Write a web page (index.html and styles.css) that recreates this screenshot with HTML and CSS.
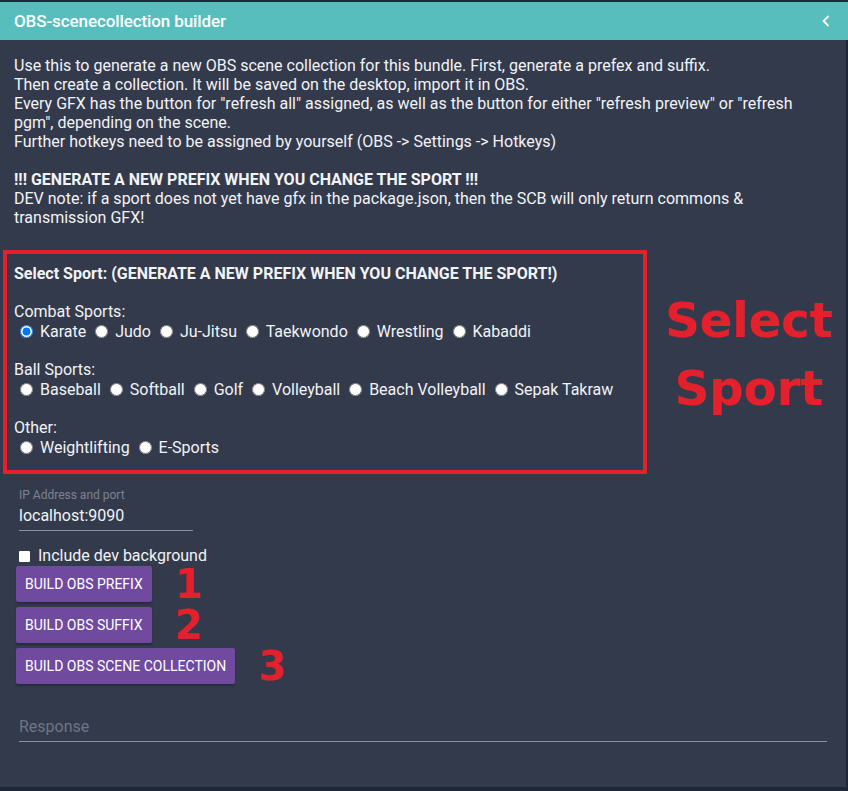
FILE: index.html
```html
<!DOCTYPE html>
<html>
<head>
<meta charset="utf-8">
<link rel="stylesheet" href="styles.css">
</head>
<body>
<div class="panel">
  <div class="header">
    <span class="title">OBS-scenecollection builder</span>
    <svg class="chev" width="10" height="14" viewBox="0 0 10 14"><path d="M7.5 2 L2.5 7 L7.5 12" fill="none" stroke="#ffffff" stroke-width="1.8"/></svg>
  </div>
  <div class="content">
    <div class="intro">
      <div>Use this to generate a new OBS scene collection for this bundle. First, generate a prefex and suffix.</div>
      <div>Then create a collection. It will be saved on the desktop, import it in OBS.</div>
      <div>Every GFX has the button for "refresh all" assigned, as well as the button for either "refresh preview" or "refresh</div>
      <div>pgm", depending on the scene.</div>
      <div>Further hotkeys need to be assigned by yourself (OBS -&gt; Settings -&gt; Hotkeys)</div>
      <div class="blank"></div>
      <div class="bold">!!! GENERATE A NEW PREFIX WHEN YOU CHANGE THE SPORT !!!</div>
      <div>DEV note: if a sport does not yet have gfx in the package.json, then the SCB will only return commons &amp;</div>
      <div>transmission GFX!</div>
    </div>

    <div class="sport-row">
      <div class="sport-box">
        <div class="bold line">Select Sport: (GENERATE A NEW PREFIX WHEN YOU CHANGE THE SPORT!)</div>
        <div class="group">
          <div class="line">Combat Sports:</div>
          <div class="line radios"><input type="radio" name="s" checked> Karate <input type="radio" name="s"> Judo <input type="radio" name="s"> Ju-Jitsu <input type="radio" name="s"> Taekwondo <input type="radio" name="s"> Wrestling <input type="radio" name="s"> Kabaddi</div>
        </div>
        <div class="group">
          <div class="line">Ball Sports:</div>
          <div class="line radios"><input type="radio" name="s"> Baseball <input type="radio" name="s"> Softball <input type="radio" name="s"> Golf <input type="radio" name="s"> Volleyball <input type="radio" name="s"> Beach Volleyball <input type="radio" name="s"> Sepak Takraw</div>
        </div>
        <div class="group">
          <div class="line">Other:</div>
          <div class="line radios"><input type="radio" name="s"> Weightlifting <input type="radio" name="s"> E-Sports</div>
        </div>
      </div>
      <div class="annot">Select<br>Sport</div>
    </div>

    <div class="field ip">
      <div class="flabel">IP Address and port</div>
      <div class="fvalue">localhost:9090</div>
    </div>

    <label class="check"><span class="cbox"></span>Include dev background</label>

    <div class="btn-row first"><button class="btn">BUILD OBS PREFIX</button><span class="num">1</span></div>
    <div class="btn-row"><button class="btn">BUILD OBS SUFFIX</button><span class="num">2</span></div>
    <div class="btn-row"><button class="btn">BUILD OBS SCENE COLLECTION</button><span class="num">3</span></div>

    <div class="field resp">
      <div class="fvalue placeholder">Response</div>
    </div>
  </div>
</div>
</body>
</html>
```

FILE: styles.css
```css
html, body {
  margin: 0;
  padding: 0;
  background: #1f2838;
}
body {
  width: 848px;
  height: 791px;
  overflow: hidden;
  font-family: Roboto, "Liberation Sans", sans-serif;
  color: #f2f3f5;
}
.panel {
  margin-top: 2px;
  width: 846px;
  height: 785px;
  background: #333a4c;
  box-sizing: border-box;
}
.header {
  height: 38px;
  background: #58bdbd;
  display: flex;
  align-items: center;
  justify-content: space-between;
  padding: 0 17px 0 14px;
  box-sizing: border-box;
  width: 848px;
}
.title {
  font-size: 17px;
  font-weight: 500;
  color: #ffffff;
  letter-spacing: -0.1px;
}
.chev {
  display: block;
}
.content {
  padding: 16px 0 0 0;
}
.intro {
  padding-left: 14px;
  font-size: 16px;
  line-height: 19px;
  white-space: nowrap;
}
.blank {
  height: 19px;
}
.bold {
  font-weight: 700;
}
.sport-row {
  display: flex;
  margin-top: 23px;
}
.sport-box {
  margin-left: 3px;
  width: 644px;
  height: 224px;
  box-sizing: border-box;
  border: 4px solid #e3202b;
  padding: 10px 0 0 7px;
  font-size: 16px;
  white-space: nowrap;
}
.line {
  line-height: 20px;
  height: 20px;
}
.group {
  margin-top: 18px;
}
.radios input {
  width: 13px;
  height: 13px;
  margin: 0 3px 0 5px;
  vertical-align: -1px;
}
.radios input:first-child {
  margin-left: 6px;
}
.annot {
  flex: 1;
  text-align: center;
  font-family: "DejaVu Sans", sans-serif;
  font-weight: 700;
  font-size: 48px;
  line-height: 68px;
  color: #e3202b;
  padding-top: 36px;
  padding-left: 4px;
}
.field {
  margin-left: 19px;
}
.ip {
  margin-top: 14px;
  width: 174px;
  border-bottom: 1px solid #8a909c;
}
.flabel {
  font-size: 12px;
  line-height: 14px;
  color: #7d8391;
}
.fvalue {
  font-size: 16px;
  line-height: 20px;
  padding: 4px 0 4px 0;
}
.check {
  display: flex;
  align-items: center;
  margin: 15px 0 0 19px;
  font-size: 16px;
  line-height: 20px;
}
.cbox {
  width: 11px;
  height: 11px;
  background: #ffffff;
  border-radius: 1px;
  margin-right: 8px;
}
.btn-row {
  display: flex;
  align-items: center;
  margin: 5px 0 0 16px;
}
.btn-row.first {
  margin-top: 0;
}
.btn {
  height: 36px;
  padding: 0 9px;
  border: none;
  border-radius: 2px;
  background: #6f4a9e;
  color: #ffffff;
  font-family: Roboto, "Liberation Sans", sans-serif;
  font-size: 14px;
  font-weight: 400;
  box-shadow: 0 2px 2px rgba(0,0,0,0.25);
}
.num {
  margin-left: 23px;
  font-family: "DejaVu Sans", sans-serif;
  font-weight: 700;
  font-size: 40px;
  line-height: 32px;
  color: #e3202b;
}
.resp {
  margin-top: 29px;
  width: 808px;
  border-bottom: 1px solid #8a909c;
}
.placeholder {
  color: #6f7585;
}
```
